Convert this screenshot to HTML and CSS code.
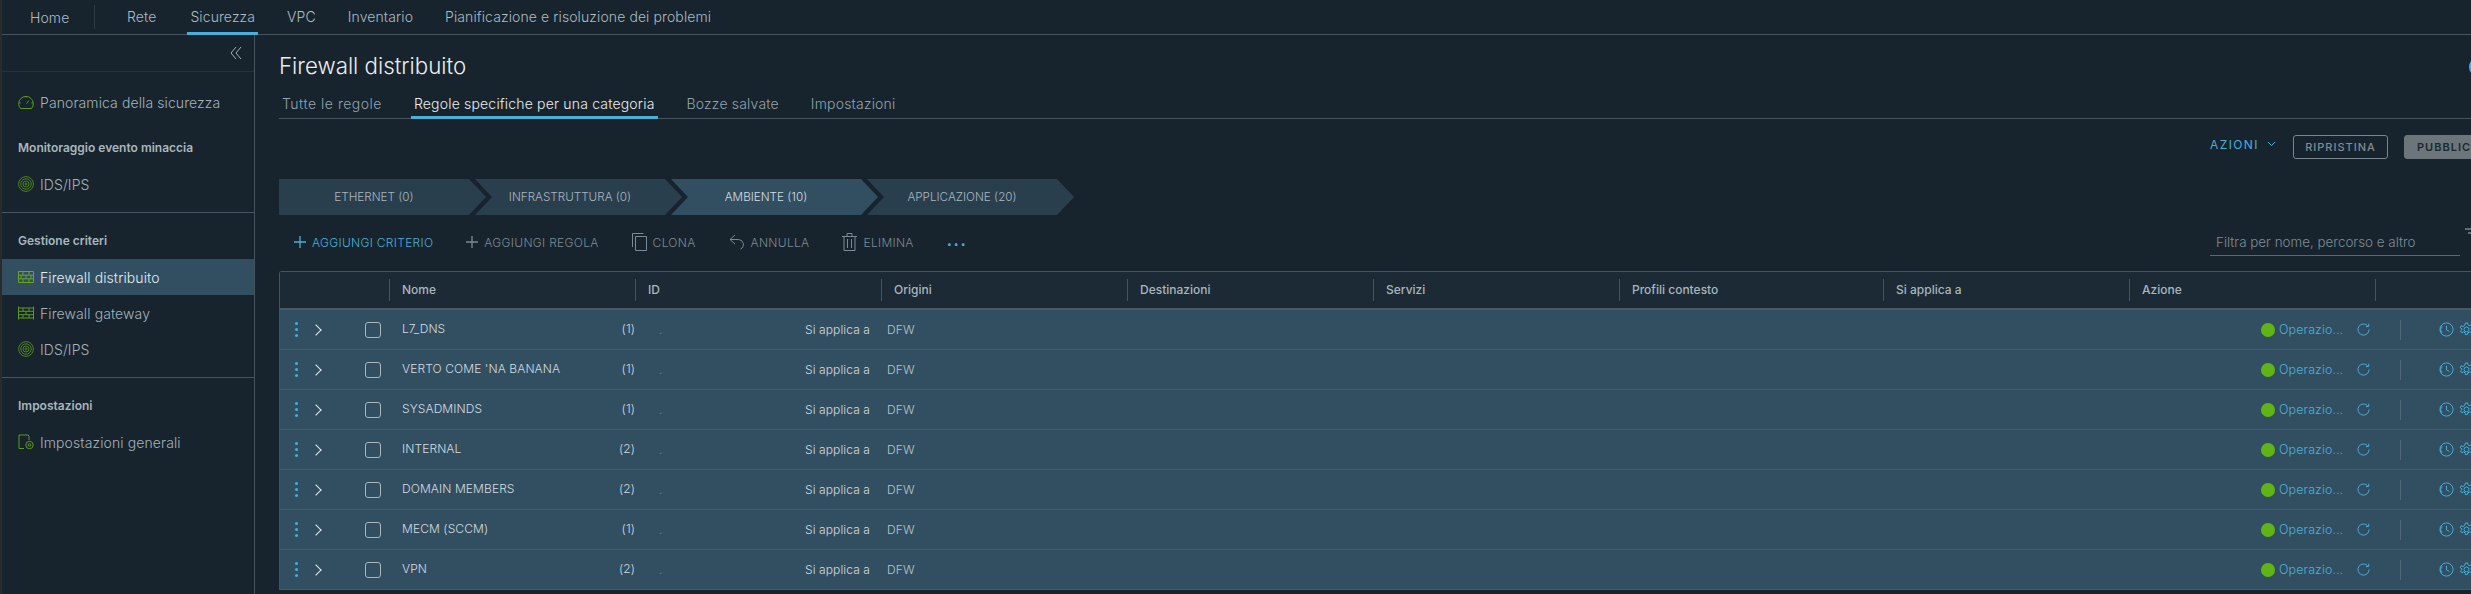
FILE: index.html
```html
<!DOCTYPE html>
<html lang="it">
<head>
    <meta charset="UTF-8">
    <title>Firewall distribuito</title>
    <link rel="stylesheet" href="styles.css">
</head>
<body>
    <svg class="defs" width="0" height="0">
        <symbol id="i-refresh" viewBox="0 0 14 14"><path d="M11.600 3.200A6 6 0 1 0 13 7M12.600 .8v3h-3" fill="none" stroke="currentColor"/></symbol>
        <symbol id="i-clock" viewBox="0 0 16 16"><circle cx="8" cy="8" r="7" fill="none" stroke="currentColor"/><path d="M3 4.500a6 6 0 0 0 0 7M8 4v4.400l3 1.600" fill="none" stroke="currentColor"/></symbol>
        <symbol id="i-gear" viewBox="0 0 16 16"><circle cx="8" cy="8" r="2.600" fill="none" stroke="currentColor"/><path d="M6.800 1h2.400l.4 2 1.600.8 1.900-.8 1.200 2-1.500 1.400v1.600l1.500 1.400-1.200 2-1.900-.8-1.600.8-.4 2H6.800l-.4-2-1.600-.8-1.900.8-1.200-2 1.500-1.400V7.400L1.200 6l1.200-2 1.900.8 1.600-.8z" fill="none" stroke="currentColor"/></symbol>
        <symbol id="i-target" viewBox="0 0 16 16"><g fill="none" stroke="currentColor" stroke-width=".8"><circle cx="8" cy="8" r="7.400"/><circle cx="8" cy="8" r="5.200"/><circle cx="8" cy="8" r="3"/><circle cx="8" cy="8" r="1"/></g></symbol>
    </svg>

    <div class="topnav">
        <a class="nav-home">Home</a>
        <span class="nav-sep"></span>
        <a class="nav-item">Rete</a>
        <a class="nav-item active">Sicurezza</a>
        <a class="nav-item">VPC</a>
        <a class="nav-item">Inventario</a>
        <a class="nav-item">Pianificazione e risoluzione dei problemi</a>
    </div>

    <div class="layout">
        <aside class="sidebar">
            <div class="collapse">
                <svg width="12" height="14" viewBox="0 0 12 14"><path d="M6 1 1 7l5 6M11 1 6 7l5 6" fill="none" stroke="#9fb0bb"/></svg>
            </div>
            <div class="side-group first">
                <a class="side-link">
                    <svg class="side-icon" width="16" height="16" viewBox="0 0 16 16"><path d="M2.500 14.500h11A7.300 7.300 0 1 0 2.500 14.500zM8.500 9.500 11 6.500M1 9h1.500M13.500 9H15M8 2v1.500" fill="none" stroke="#5c9a1e"/></svg>
                    Panoramica della sicurezza
                </a>
            </div>
            <div class="side-group">
                <div class="side-title">Monitoraggio evento minaccia</div>
                <a class="side-link"><svg class="side-icon target" width="16" height="16"><use href="#i-target"/></svg>IDS/IPS</a>
            </div>
            <div class="side-group">
                <div class="side-title">Gestione criteri</div>
                <a class="side-link current">
                    <svg class="side-icon" width="16" height="12" viewBox="0 0 16 12"><path d="M.5.500h15v11H.500zM.5 4.200h15M.5 7.800h15M5 .5v3.700M11 .5v3.700M3 4.200v3.600M8 4.200v3.600M13 4.200v3.600M5 7.800v3.700M11 7.800v3.700" fill="none" stroke="#6aa51f"/></svg>
                    Firewall distribuito
                </a>
                <a class="side-link">
                    <svg class="side-icon" width="16" height="14" viewBox="0 0 16 14"><path d="M.5.500v13M15.500.500v13M.5 2h15M.5 12h15M.5 5.300h15M.5 8.700h15M5 2v3.300M11 2v3.300M8 5.300v3.400M5 8.700V12M11 8.700V12" fill="none" stroke="#5c9a1e"/></svg>
                    Firewall gateway
                </a>
                <a class="side-link"><svg class="side-icon target" width="16" height="16"><use href="#i-target"/></svg>IDS/IPS</a>
            </div>
            <div class="side-group last">
                <div class="side-title">Impostazioni</div>
                <a class="side-link">
                    <svg class="side-icon" width="16" height="16" viewBox="0 0 16 16"><path d="M6 14.500H1V1h9l1 1v4" fill="none" stroke="#5c9a1e"/><circle cx="11.500" cy="11" r="3.700" fill="none" stroke="#5c9a1e"/><circle cx="11.500" cy="11" r="1.300" fill="none" stroke="#5c9a1e"/></svg>
                    Impostazioni generali
                </a>
            </div>
        </aside>

        <main class="content">
            <div class="title-row">
                <h1>Firewall distribuito</h1>
                <span class="help-ring"></span>
            </div>
            <div class="tabs">
                <a class="tab">Tutte le regole</a>
                <a class="tab active">Regole specifiche per una categoria</a>
                <a class="tab">Bozze salvate</a>
                <a class="tab">Impostazioni</a>
            </div>

            <div class="page-actions">
                <a class="azioni">AZIONI
                    <svg width="9" height="6" viewBox="0 0 9 6"><path d="M1 1l3.500 3.500L8 1" fill="none" stroke="#49afd9"/></svg>
                </a>
                <button class="btn">RIPRISTINA</button>
                <button class="btn solid">PUBBLICA</button>
            </div>

            <div class="categories">
                <div class="cat">ETHERNET (0)</div>
                <div class="cat">INFRASTRUTTURA (0)</div>
                <div class="cat active">AMBIENTE (10)</div>
                <div class="cat">APPLICAZIONE (20)</div>
            </div>

            <div class="toolbar">
                <a class="tool primary"><svg width="12" height="12" viewBox="0 0 12 12"><path d="M6 0v12M0 6h12" stroke="#49afd9" stroke-width="1.300"/></svg>AGGIUNGI CRITERIO</a>
                <a class="tool"><svg width="12" height="12" viewBox="0 0 12 12"><path d="M6 0v12M0 6h12" stroke="#7c8a93" stroke-width="1.300"/></svg>AGGIUNGI REGOLA</a>
                <a class="tool"><svg width="15" height="18" viewBox="0 0 15 18"><path d="M3.500 3.500h11v14h-11zM.5 14V.5h11" fill="none" stroke="#7c8a93"/></svg>CLONA</a>
                <a class="tool"><svg width="16" height="16" viewBox="0 0 16 16"><path d="M6 1 1 5.500 6 10M1 5.500h8.500a5 5 0 0 1 2 9.500" fill="none" stroke="#7c8a93"/></svg>ANNULLA</a>
                <a class="tool"><svg width="15" height="18" viewBox="0 0 15 18"><path d="M0 3.500h15M5 3V.5h5V3M2 3.500v14h11v-14M5.500 6v9M9.500 6v9" fill="none" stroke="#7c8a93"/></svg>ELIMINA</a>
                <a class="more">...</a>
                <div class="filter">
                    <span class="filter-input">Filtra per nome, percorso e altro</span>
                    <svg width="12" height="10" viewBox="0 0 12 10"><path d="M0 1h12M3 5h6" stroke="#a9b6be"/></svg>
                </div>
            </div>

            <div class="rules">
                <div class="rules-head">
                    <div class="th"></div>
                    <div class="th">Nome</div>
                    <div class="th">ID</div>
                    <div class="th">Origini</div>
                    <div class="th">Destinazioni</div>
                    <div class="th">Servizi</div>
                    <div class="th">Profili contesto</div>
                    <div class="th">Si applica a</div>
                    <div class="th">Azione</div>
                    <div class="th"></div>
                </div>

                <div class="rule">
                    <div class="rule-ctl"><span class="grip"></span><span class="expand"></span><span class="check"></span></div>
                    <div class="rule-name">L7_DNS<span class="count">(1)</span></div>
                    <div class="rule-id"><i>.</i><span>Si applica a</span></div>
                    <div class="rule-dfw">DFW</div>
                    <div class="rule-status"><b></b><span>Operazio...</span><svg width="13" height="13"><use href="#i-refresh"/></svg></div>
                    <div class="rule-tools"><span class="vsep"></span><svg width="15" height="15"><use href="#i-clock"/></svg><svg width="15" height="15"><use href="#i-gear"/></svg></div>
                </div>
                <div class="rule">
                    <div class="rule-ctl"><span class="grip"></span><span class="expand"></span><span class="check"></span></div>
                    <div class="rule-name">VERTO COME 'NA BANANA<span class="count">(1)</span></div>
                    <div class="rule-id"><i>.</i><span>Si applica a</span></div>
                    <div class="rule-dfw">DFW</div>
                    <div class="rule-status"><b></b><span>Operazio...</span><svg width="13" height="13"><use href="#i-refresh"/></svg></div>
                    <div class="rule-tools"><span class="vsep"></span><svg width="15" height="15"><use href="#i-clock"/></svg><svg width="15" height="15"><use href="#i-gear"/></svg></div>
                </div>
                <div class="rule">
                    <div class="rule-ctl"><span class="grip"></span><span class="expand"></span><span class="check"></span></div>
                    <div class="rule-name">SYSADMINDS<span class="count">(1)</span></div>
                    <div class="rule-id"><i>.</i><span>Si applica a</span></div>
                    <div class="rule-dfw">DFW</div>
                    <div class="rule-status"><b></b><span>Operazio...</span><svg width="13" height="13"><use href="#i-refresh"/></svg></div>
                    <div class="rule-tools"><span class="vsep"></span><svg width="15" height="15"><use href="#i-clock"/></svg><svg width="15" height="15"><use href="#i-gear"/></svg></div>
                </div>
                <div class="rule">
                    <div class="rule-ctl"><span class="grip"></span><span class="expand"></span><span class="check"></span></div>
                    <div class="rule-name">INTERNAL<span class="count">(2)</span></div>
                    <div class="rule-id"><i>.</i><span>Si applica a</span></div>
                    <div class="rule-dfw">DFW</div>
                    <div class="rule-status"><b></b><span>Operazio...</span><svg width="13" height="13"><use href="#i-refresh"/></svg></div>
                    <div class="rule-tools"><span class="vsep"></span><svg width="15" height="15"><use href="#i-clock"/></svg><svg width="15" height="15"><use href="#i-gear"/></svg></div>
                </div>
                <div class="rule">
                    <div class="rule-ctl"><span class="grip"></span><span class="expand"></span><span class="check"></span></div>
                    <div class="rule-name">DOMAIN MEMBERS<span class="count">(2)</span></div>
                    <div class="rule-id"><i>.</i><span>Si applica a</span></div>
                    <div class="rule-dfw">DFW</div>
                    <div class="rule-status"><b></b><span>Operazio...</span><svg width="13" height="13"><use href="#i-refresh"/></svg></div>
                    <div class="rule-tools"><span class="vsep"></span><svg width="15" height="15"><use href="#i-clock"/></svg><svg width="15" height="15"><use href="#i-gear"/></svg></div>
                </div>
                <div class="rule">
                    <div class="rule-ctl"><span class="grip"></span><span class="expand"></span><span class="check"></span></div>
                    <div class="rule-name">MECM (SCCM)<span class="count">(1)</span></div>
                    <div class="rule-id"><i>.</i><span>Si applica a</span></div>
                    <div class="rule-dfw">DFW</div>
                    <div class="rule-status"><b></b><span>Operazio...</span><svg width="13" height="13"><use href="#i-refresh"/></svg></div>
                    <div class="rule-tools"><span class="vsep"></span><svg width="15" height="15"><use href="#i-clock"/></svg><svg width="15" height="15"><use href="#i-gear"/></svg></div>
                </div>
                <div class="rule">
                    <div class="rule-ctl"><span class="grip"></span><span class="expand"></span><span class="check"></span></div>
                    <div class="rule-name">VPN<span class="count">(2)</span></div>
                    <div class="rule-id"><i>.</i><span>Si applica a</span></div>
                    <div class="rule-dfw">DFW</div>
                    <div class="rule-status"><b></b><span>Operazio...</span><svg width="13" height="13"><use href="#i-refresh"/></svg></div>
                    <div class="rule-tools"><span class="vsep"></span><svg width="15" height="15"><use href="#i-clock"/></svg><svg width="15" height="15"><use href="#i-gear"/></svg></div>
                </div>
            </div>
        </main>
    </div>
</body>
</html>
```

FILE: styles.css
```css
* {
    margin: 0;
    padding: 0;
    box-sizing: border-box;
}

html, body {
    height: 100%;
    overflow: hidden;
}

body {
    font-family: Inter, "Noto Sans", sans-serif;
    font-weight: 300;
    background: #17242d;
    color: #adbbc4;
    border-left: 2px solid #2b2b2b;
}

.defs {
    position: absolute;
}

/* top nav */
.topnav {
    display: flex;
    height: 35px;
    align-items: stretch;
    border-bottom: 1px solid #47545f;
    font-size: 14px;
    padding-left: 28px;
}

.topnav a {
    display: flex;
    align-items: center;
    white-space: nowrap;
    letter-spacing: 0.1px;
}

.nav-home {
    width: 64px;
}

.nav-sep {
    width: 1px;
    height: 24px;
    margin-top: 5px;
    background: #2c3a44;
}

.nav-item {
    padding: 0 3px;
    margin-left: 26px;
    margin-bottom: -1px;
    border-bottom: 3px solid transparent;
}

.nav-sep + .nav-item {
    margin-left: 29px;
    margin-right: 2px;
}

.nav-item.active {
    border-bottom-color: #49afd9;
}

/* sidebar */
.layout {
    display: flex;
    height: 559px;
}

.sidebar {
    width: 253px;
    flex: none;
    border-right: 1px solid #47545f;
}

.collapse {
    height: 37px;
    display: flex;
    align-items: center;
    justify-content: flex-end;
    padding: 0 12px 0 0;
    border-bottom: 1px solid #25333d;
}

.side-group {
    border-bottom: 1px solid #47545f;
    padding: 18px 0 10px;
}

.side-group.first {
    border-bottom: none;
    padding: 12px 0 0;
}

.side-group.last {
    border-bottom: none;
}

.side-title {
    font-size: 12px;
    font-weight: 600;
    color: #a9b6be;
    padding-left: 16px;
    line-height: 20px;
    margin-bottom: 8px;
}

.side-link {
    display: flex;
    align-items: center;
    height: 36px;
    padding-left: 16px;
    font-size: 14px;
    letter-spacing: 0.1px;
    color: #a3b2bb;
}

.side-link.current {
    background: #324f61;
    color: #e6ecef;
}

.side-icon {
    flex: none;
    margin-right: 6px;
}

.side-icon.target {
    color: #5c9a1e;
}

/* main */
.content {
    flex: none;
    width: 2300px;
    padding-left: 24px;
}

.title-row {
    height: 49px;
    position: relative;
    display: flex;
    align-items: center;
    padding-top: 12px;
}

h1 {
    font-size: 22.300px;
    font-weight: 300;
    color: #e9eef1;
    white-space: nowrap;
}

.help-ring {
    position: absolute;
    left: 2190px;
    top: 22px;
    width: 20px;
    height: 20px;
    border: 2px solid #49afd9;
    border-radius: 50%;
}

.tabs {
    display: flex;
    gap: 26px;
    height: 35px;
    border-bottom: 1px solid #47545f;
    font-size: 14px;
    letter-spacing: 0.180px;
}

.tab {
    display: flex;
    align-items: center;
    padding: 6px 3px 0;
    margin-bottom: -1px;
    border-bottom: 3px solid transparent;
    white-space: nowrap;
    color: #94a3ac;
}

.tab:first-child {
    letter-spacing: 0.500px;
}

.tab.active {
    color: #e9eef1;
    border-bottom-color: #49afd9;
}

.page-actions {
    display: flex;
    align-items: flex-start;
    height: 60px;
    padding: 16px 0 0 1931px;
}

.azioni {
    display: flex;
    align-items: center;
    gap: 8px;
    width: 83px;
    height: 18px;
    font-size: 12px;
    font-weight: 400;
    letter-spacing: 1.400px;
    color: #49afd9;
}

.btn {
    height: 24px;
    width: 95px;
    font: 500 11px Inter, sans-serif;
    letter-spacing: 1px;
    color: #7f8c95;
    background: none;
    border: 1px solid #77858e;
    border-radius: 3px;
    margin-right: 16px;
}

.btn.solid {
    width: 120px;
    padding-left: 12px;
    text-align: left;
    background: #6c7579;
    border-color: #6c7579;
    color: #1b2a32;
    font-weight: 600;
}

/* category chevrons */
.categories {
    display: flex;
    height: 36px;
}

.cat {
    display: flex;
    align-items: center;
    justify-content: center;
    width: 207px;
    margin-right: -11px;
    padding-right: 17px;
    font-size: 11.700px;
    color: #a9b6be;
    background: #2a3f4e;
    clip-path: polygon(0 0, 190px 0, 207px 50%, 190px 100%, 0 100%, 17px 50%);
}

.cat:first-child {
    clip-path: polygon(0 0, 190px 0, 207px 50%, 190px 100%, 0 100%);
}

.cat.active {
    background: #324f61;
    color: #d5dde2;
}

/* toolbar */
.toolbar {
    display: flex;
    align-items: center;
    height: 56px;
    padding: 0 78px 2px 15px;
}

.tool {
    display: flex;
    align-items: center;
    gap: 6px;
    margin-right: 33px;
    font-size: 12px;
    letter-spacing: 0.300px;
    color: #7c8a93;
    white-space: nowrap;
}

.tool.primary {
    color: #49afd9;
}

.more {
    font-size: 16px;
    font-weight: 700;
    letter-spacing: 1.500px;
    color: #49afd9;
    margin-top: -4px;
}

.filter {
    display: flex;
    align-items: flex-start;
    gap: 5px;
    margin-left: auto;
}

.filter-input {
    width: 250px;
    height: 28px;
    line-height: 28px;
    padding-left: 6px;
    font-size: 13.400px;
    color: #7f8c95;
    border-bottom: 1px solid #5a6872;
    white-space: nowrap;
}

/* rules table */
.rules {
    width: 2240px;
    border-top: 1px solid #47545f;
    border-left: 1px solid #47545f;
    border-radius: 3px 0 0 0;
}

.rules-head,
.rule {
    display: grid;
}

.rules-head {
    grid-template-columns: 109px repeat(5, 246px) 264px 246px 246px 110px;
    height: 38px;
    background: #1b2a34;
    border-bottom: 2px solid #4a5b67;
}

.th {
    margin: 7px 0;
    padding-left: 12px;
    border-left: 1px solid #47545f;
    font-size: 12px;
    font-weight: 500;
    line-height: 22px;
    color: #a9b6be;
}

.th:first-child {
    border-left: none;
}

.rule {
    grid-template-columns: 109px 246px 246px 1248px 246px 110px;
    height: 40px;
    background: #324f61;
    border-bottom: 1px solid #445a69;
    align-items: center;
    font-size: 12px;
    letter-spacing: 0.100px;
    color: #d3dbe0;
}

.rule-ctl {
    display: flex;
    align-items: center;
    padding-left: 15px;
}

.grip {
    width: 3px;
    height: 3px;
    border-radius: 50%;
    background: #49afd9;
    box-shadow: 0 -6px 0 #49afd9, 0 6px 0 #49afd9;
}

.expand {
    width: 8px;
    height: 8px;
    margin-left: 14px;
    border-top: 1.500px solid #e6ecef;
    border-right: 1.500px solid #e6ecef;
    transform: rotate(45deg);
}

.check {
    width: 16px;
    height: 16px;
    margin-left: 45px;
    border: 1px solid #a9b6be;
    border-radius: 3px;
}

.rule-name {
    display: flex;
    justify-content: space-between;
    padding: 0 0 2px 13px;
    white-space: nowrap;
}

.rule-id {
    display: flex;
    justify-content: space-between;
    padding: 0 11px 0 24px;
}

.rule-id i {
    color: #6d8190;
    font-style: normal;
}

.rule-dfw {
    padding-left: 6px;
    color: #b9c5cd;
}

.rule-status {
    display: flex;
    align-items: center;
    padding-left: 132px;
    font-size: 12.500px;
    color: #49afd9;
    white-space: nowrap;
}

.rule-status b {
    flex: none;
    width: 14px;
    height: 14px;
    border-radius: 50%;
    background: #60b515;
    margin-right: 4px;
}

.rule-status span {
    width: 78px;
}

.rule-tools {
    display: flex;
    align-items: center;
    padding-left: 25px;
    color: #49afd9;
}

.vsep {
    width: 1px;
    height: 20px;
    background: #516876;
    margin-right: 38px;
}

.rule-tools svg {
    margin-right: 5px;
    flex: none;
}
```
